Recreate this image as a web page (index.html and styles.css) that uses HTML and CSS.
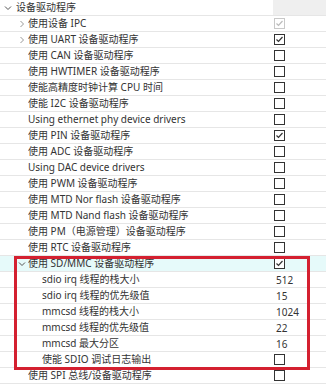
FILE: index.html
```html
<!DOCTYPE html>
<html>
<head>
<meta charset="utf-8">
<link rel="stylesheet" href="styles.css">
</head>
<body>
<div class="tree">
  <div class="row root">
    <span class="tw"><svg width="8" height="8" viewBox="0 0 8 8"><path d="M1 2.5 L4 5.5 L7 2.5" fill="none" stroke="#555" stroke-width="1"/></svg></span>
    <span class="name">设备驱动程序</span>
    <span class="val shade"></span>
  </div>
  <div class="row l1">
    <span class="tw"><svg width="8" height="8" viewBox="0 0 8 8"><path d="M2.5 1 L5.5 4 L2.5 7" fill="none" stroke="#999" stroke-width="1"/></svg></span>
    <span class="name">使用设备 IPC</span>
    <span class="val"><span class="cb dis"><svg viewBox="0 0 11 11"><path d="M2.5 5.5 L4.5 7.5 L8.5 3" fill="none" stroke="#bbb" stroke-width="1.2"/></svg></span></span>
  </div>
  <div class="row l1">
    <span class="tw"><svg width="8" height="8" viewBox="0 0 8 8"><path d="M2.5 1 L5.5 4 L2.5 7" fill="none" stroke="#999" stroke-width="1"/></svg></span>
    <span class="name">使用 UART 设备驱动程序</span>
    <span class="val"><span class="cb"><svg viewBox="0 0 11 11"><path d="M2.5 5.5 L4.5 7.5 L8.5 3" fill="none" stroke="#333" stroke-width="1.2"/></svg></span></span>
  </div>
  <div class="row l1"><span class="tw"></span><span class="name">使用 CAN 设备驱动程序</span><span class="val"><span class="cb"></span></span></div>
  <div class="row l1"><span class="tw"></span><span class="name">使用 HWTIMER 设备驱动程序</span><span class="val"><span class="cb"></span></span></div>
  <div class="row l1"><span class="tw"></span><span class="name">使能高精度时钟计算 CPU 时间</span><span class="val"><span class="cb"></span></span></div>
  <div class="row l1"><span class="tw"></span><span class="name">使能 I2C 设备驱动程序</span><span class="val"><span class="cb"></span></span></div>
  <div class="row l1"><span class="tw"></span><span class="name">Using ethernet phy device drivers</span><span class="val"><span class="cb"></span></span></div>
  <div class="row l1"><span class="tw"></span><span class="name">使用 PIN 设备驱动程序</span><span class="val"><span class="cb"><svg viewBox="0 0 11 11"><path d="M2.5 5.5 L4.5 7.5 L8.5 3" fill="none" stroke="#333" stroke-width="1.2"/></svg></span></span></div>
  <div class="row l1"><span class="tw"></span><span class="name">使用 ADC 设备驱动程序</span><span class="val"><span class="cb"></span></span></div>
  <div class="row l1"><span class="tw"></span><span class="name">Using DAC device drivers</span><span class="val"><span class="cb"></span></span></div>
  <div class="row l1"><span class="tw"></span><span class="name">使用 PWM 设备驱动程序</span><span class="val"><span class="cb"></span></span></div>
  <div class="row l1"><span class="tw"></span><span class="name">使用 MTD Nor flash 设备驱动程序</span><span class="val"><span class="cb"></span></span></div>
  <div class="row l1"><span class="tw"></span><span class="name">使用 MTD Nand flash 设备驱动程序</span><span class="val"><span class="cb"></span></span></div>
  <div class="row l1"><span class="tw"></span><span class="name">使用 PM（电源管理）设备驱动程序</span><span class="val"><span class="cb"></span></span></div>
  <div class="row l1"><span class="tw"></span><span class="name">使用 RTC 设备驱动程序</span><span class="val"><span class="cb"></span></span></div>
  <div class="row l1 sel">
    <span class="tw"><svg width="8" height="8" viewBox="0 0 8 8"><path d="M1 2.5 L4 5.5 L7 2.5" fill="none" stroke="#555" stroke-width="1"/></svg></span>
    <span class="name">使用 SD/MMC 设备驱动程序</span>
    <span class="val"><span class="cb"><svg viewBox="0 0 11 11"><path d="M2.5 5.5 L4.5 7.5 L8.5 3" fill="none" stroke="#333" stroke-width="1.2"/></svg></span></span>
  </div>
  <div class="row l2"><span class="name">sdio irq 线程的栈大小</span><span class="val num">512</span></div>
  <div class="row l2"><span class="name">sdio irq 线程的优先级值</span><span class="val num">15</span></div>
  <div class="row l2"><span class="name">mmcsd 线程的栈大小</span><span class="val num">1024</span></div>
  <div class="row l2"><span class="name">mmcsd 线程的优先级值</span><span class="val num">22</span></div>
  <div class="row l2"><span class="name">mmcsd 最大分区</span><span class="val num">16</span></div>
  <div class="row l2"><span class="name">使能 SDIO 调试日志输出</span><span class="val"><span class="cb"></span></span></div>
  <div class="row l1"><span class="tw"></span><span class="name">使用 SPI 总线/设备驱动程序</span><span class="val"><span class="cb"></span></span></div>
  <div class="highlight"></div>
</div>
</body>
</html>
```

FILE: styles.css
```css
html, body {
  margin: 0;
  padding: 0;
  background: #fff;
}
body {
  width: 326px;
  height: 386px;
  overflow: hidden;
  font-family: "Noto Sans", "Noto Sans CJK SC", sans-serif;
  font-size: 10px;
  color: #333;
}
.tree {
  position: relative;
  display: flex;
  flex-direction: column;
}
.row {
  display: flex;
  align-items: center;
  height: 15px;
  border-bottom: 1px solid #e6e6e6;
  white-space: nowrap;
}
.row.sel {
  background: #e6fafa;
}
.tw {
  width: 12px;
  flex: none;
  display: flex;
  align-items: center;
  justify-content: center;
}
.root .tw {
  margin-left: 2px;
  margin-right: 2px;
}
.l1 .tw {
  margin-left: 16px;
}
.l2 .name {
  margin-left: 42px;
}
.name {
  flex: 1;
  overflow: hidden;
  line-height: 15px;
}
.val {
  width: 53px;
  flex: none;
  height: 15px;
  display: flex;
  align-items: center;
  padding-left: 1px;
  box-sizing: border-box;
}
.val.shade {
  background: #efefef;
}
.num {
  padding-left: 3px;
}
.cb {
  width: 11px;
  height: 11px;
  box-sizing: border-box;
  border: 1px solid #333;
  background: #fff;
  display: block;
}
.cb svg {
  display: block;
  width: 11px;
  height: 11px;
  margin: -1px;
}
.cb.dis {
  border-color: #c8c8c8;
}
.highlight {
  position: absolute;
  left: 14px;
  top: 256px;
  width: 296px;
  height: 114px;
  box-sizing: border-box;
  border: 3px solid #d42030;
  pointer-events: none;
}
```
